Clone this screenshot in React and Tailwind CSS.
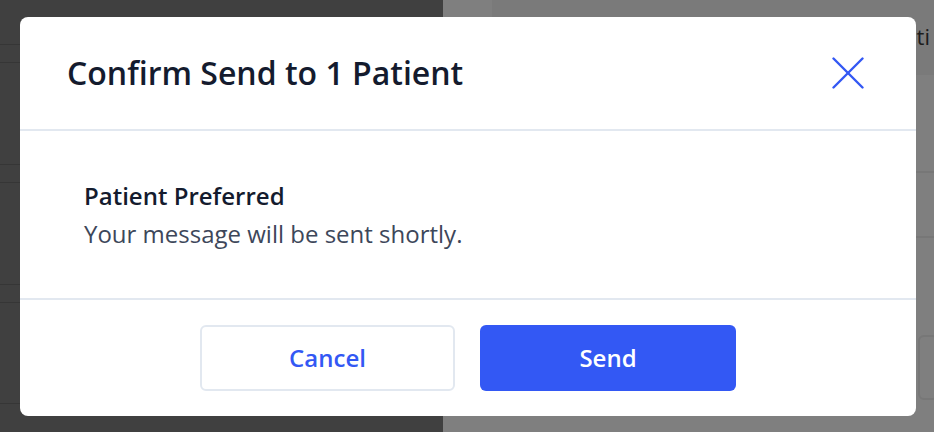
function Backdrop() {
  return (
    <div className="flex h-[432px] w-[934px]">
      <div className="flex w-[443px] flex-col bg-[#404040]">
        <div className="h-[44px]" />
        <div className="h-[19px] border-y border-[#363636]" />
        <div className="h-[101px]" />
        <div className="h-[19px] border-y border-[#363636]" />
        <div className="h-[101px]" />
        <div className="h-[19px] border-y border-[#363636]" />
        <div className="h-[101px] border-b border-[#363636]" />
      </div>
      <div className="w-[49px] bg-[#7f7f7f]" />
      <div className="flex flex-1 flex-col bg-[#7f7f7f]">
        <div className="flex h-[75px] items-start justify-end overflow-hidden bg-[#7a7a7a] pt-[22px] text-[22px] leading-[28px] text-[#1c1c1c]">
          <span className="mr-[4px]">ati</span>
        </div>
        <div className="h-[98px] border-b-2 border-[#777777]" />
        <div className="h-[65px] border-b-2 border-[#777777]" />
        <div className="flex flex-1 justify-end pt-[97px]">
          <div className="-mr-[4px] h-[65px] w-[20px] rounded-md border-2 border-[#777777]" />
        </div>
      </div>
    </div>
  );
}

function CloseIcon() {
  return (
    <svg width="32" height="32" viewBox="0 0 32 32" fill="none" stroke="currentColor" strokeWidth="2.4" strokeLinecap="round">
      <line x1="1.5" y1="1.5" x2="30.5" y2="30.5" />
      <line x1="30.5" y1="1.5" x2="1.5" y2="30.5" />
    </svg>
  );
}

export default function App() {
  return (
    <div className="relative h-[432px] w-[934px] overflow-hidden" style={{ fontFamily: '"Open Sans", sans-serif' }}>
      <Backdrop />
      <div className="absolute left-[20px] top-[17px] flex h-[399px] w-[896px] flex-col rounded-[8px] bg-white">
        <div className="flex h-[114px] items-center justify-between border-b-2 border-[#e2e8f0] pl-[47px] pr-[52px]">
          <h2 className="text-[32px] font-semibold leading-[40px] text-[#141b2e]">Confirm Send to 1 Patient</h2>
          <button className="text-[#3358f4]">
            <CloseIcon />
          </button>
        </div>
        <div className="flex h-[169px] flex-col justify-center border-b-2 border-[#e2e8f0] px-[64px]">
          <div className="text-[24px] font-semibold leading-[38px] text-[#141b2e]">Patient Preferred</div>
          <div className="text-[24px] leading-[38px] text-[#3d475a]">Your message will be sent shortly.</div>
        </div>
        <div className="flex flex-1 items-center justify-center gap-[25px]">
          <button className="h-[66px] w-[255px] rounded-[6px] border-2 border-[#e2e8f0] text-[24px] font-semibold text-[#3358f4]">
            Cancel
          </button>
          <button className="h-[66px] w-[256px] rounded-[6px] bg-[#3358f4] text-[24px] font-semibold text-white">
            Send
          </button>
        </div>
      </div>
    </div>
  );
}
